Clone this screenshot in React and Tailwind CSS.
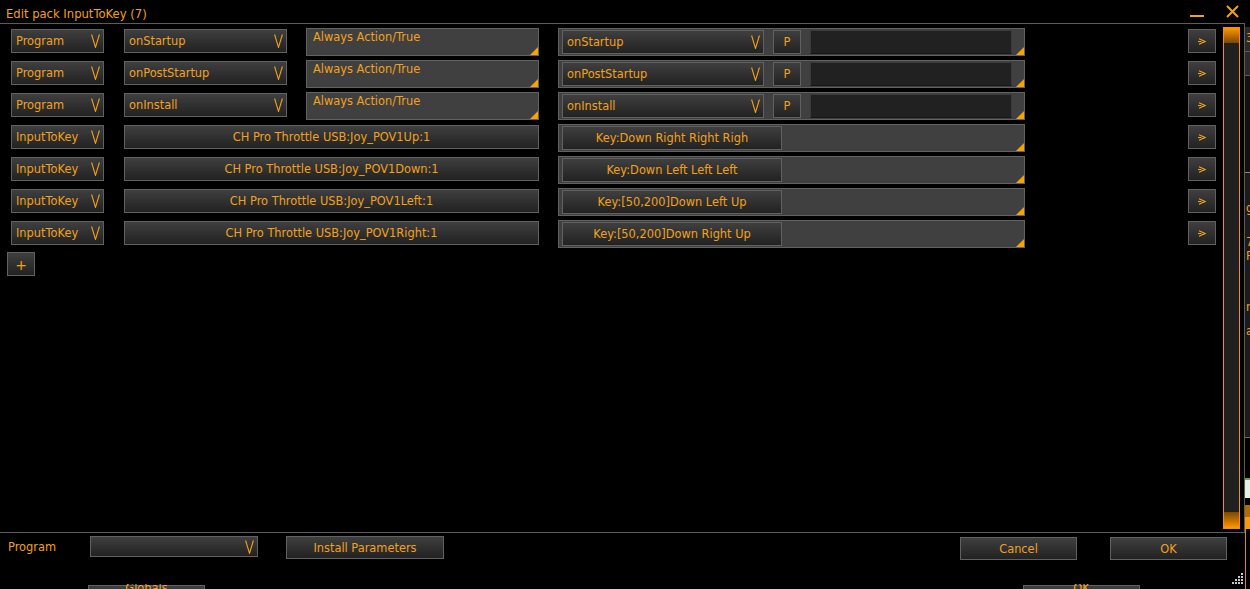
import React from 'react';

const PROGRAM_ROWS = ['onStartup', 'onPostStartup', 'onInstall'];

const INPUT_ROWS = [
  { input: 'CH Pro Throttle USB:Joy_POV1Up:1', key: 'Key:Down Right Right Righ' },
  { input: 'CH Pro Throttle USB:Joy_POV1Down:1', key: 'Key:Down Left Left Left' },
  { input: 'CH Pro Throttle USB:Joy_POV1Left:1', key: 'Key:[50,200]Down Left Up' },
  { input: 'CH Pro Throttle USB:Joy_POV1Right:1', key: 'Key:[50,200]Down Right Up' },
];

const BTN = 'border border-[#616161] bg-linear-to-b from-[#3f3f3f] to-[#222222]';

function Chevron() {
  return (
    <svg width="9" height="14" viewBox="0 0 9 14" className="shrink-0">
      <path d="M0.6 0.5 L4.5 13.3 L8.4 0.5" fill="none" stroke="#f2a11b" strokeWidth="1.1" />
    </svg>
  );
}

function Select({ label, className = '' }) {
  return (
    <div className={`flex items-center justify-between pl-[4px] pr-[3px] ${BTN} ${className}`}>
      <span className="whitespace-nowrap pt-[2px]">{label}</span>
      <Chevron />
    </div>
  );
}

function Btn({ children, className = '' }) {
  return <div className={`flex items-center justify-center whitespace-nowrap pt-[2px] ${BTN} ${className}`}>{children}</div>;
}

function Corner() {
  return <div className="absolute right-0 bottom-0 w-[8px] h-[8px] bg-[#f7a300] [clip-path:polygon(100%_0,100%_100%,0_100%)]" />;
}

function NextBtn() {
  return (
    <Btn className="ml-[163px] mt-[1px] w-[28px] h-[24px]">
      <svg width="8" height="7" viewBox="0 0 8 7" className="-mt-[2px]">
        <path d="M1 0.8 L7 3.5 L1 6.2 M0 3.5 H3.5" fill="none" stroke="#f2a11b" strokeWidth="1.2" />
      </svg>
    </Btn>
  );
}

function ProgramRow({ event }) {
  return (
    <div className="flex items-start h-[32px]">
      <Select label="Program" className="ml-[11px] mt-[1px] w-[93px] h-[24px]" />
      <Select label={event} className="ml-[20px] mt-[1px] w-[163px] h-[24px]" />
      <div className="relative ml-[19px] w-[233px] h-[28px] border border-[#616161] bg-[#404040] pl-[6px] pt-[1px] leading-[14px]">
        Always Action/True
        <Corner />
      </div>
      <div className="relative ml-[19px] w-[467px] h-[28px] border border-[#616161] bg-[#404040] pl-[3px] pt-[1px] flex items-start">
        <Select label={event} className="w-[202px] h-[24px]" />
        <Btn className="ml-[9px] w-[28px] h-[24px]">P</Btn>
        <div className="ml-[9px] w-[202px] h-[24px] border border-[#3a3a3a] border-b-[#151515] bg-[#212121]" />
        <Corner />
      </div>
      <NextBtn />
    </div>
  );
}

function InputRow({ input, keyText }) {
  return (
    <div className="flex items-start h-[32px]">
      <Select label="InputToKey" className="ml-[11px] mt-[1px] w-[93px] h-[24px]" />
      <Btn className="ml-[20px] mt-[1px] w-[415px] h-[24px]">{input}</Btn>
      <div className="relative ml-[19px] w-[467px] h-[28px] border border-[#616161] bg-[#404040] pl-[3px] pt-[1px] flex items-start">
        <Btn className="w-[220px] h-[24px]">{keyText}</Btn>
        <Corner />
      </div>
      <NextBtn />
    </div>
  );
}

function ResizeGrip() {
  return (
    <svg width="12" height="12" viewBox="0 0 12 12" className="ml-[5px] mt-[36px]">
      {[[9, 1], [6, 4], [9, 4], [3, 7], [6, 7], [9, 7], [0, 10], [3, 10], [6, 10], [9, 10]].map(([x, y], i) => (
        <rect key={i} x={x} y={y} width="2" height="2" fill="#c8c8c8" />
      ))}
    </svg>
  );
}

export default function App() {
  return (
    <div className="w-[1250px] h-[589px] bg-black overflow-hidden flex text-[#f2a11b] text-[11.4px] font-['DejaVu_Sans',Verdana,sans-serif]">
      <div className="w-[1245px] flex flex-col">
        <div className="h-[24px] border-b border-[#5c5c5c] flex items-start">
          <span className="ml-[6px] mt-[7px] text-[11.6px] leading-[15px]">Edit pack InputToKey (7)</span>
          <div className="ml-auto mt-[15px] w-[14px] h-[2px] bg-[#f2a11b]" />
          <svg width="13" height="13" viewBox="0 0 13 13" className="ml-[22px] mt-[5px] mr-[6px]">
            <path d="M1 1 L12 12 M12 1 L1 12" stroke="#f2a11b" strokeWidth="2" />
          </svg>
        </div>

        <div className="h-[509px] border-r border-b border-[#5c5c5c] flex">
          <div className="w-[1216px] pt-[4px] flex flex-col">
            {PROGRAM_ROWS.map(ev => <ProgramRow key={ev} event={ev} />)}
            {INPUT_ROWS.map(r => <InputRow key={r.input} input={r.input} keyText={r.key} />)}
            <Btn className="ml-[7px] w-[28px] h-[24px] text-[14px]">+</Btn>
          </div>
          <div className="ml-[7px] mt-[3px] w-[17px] h-[502px] border border-[#f39200] bg-[#202020] flex flex-col justify-between">
            <div className="h-[15px] bg-linear-to-b from-[#ff9800] to-[#7e4700]" />
            <div className="h-[16px] bg-linear-to-b from-[#7e4700] to-[#ff9800]" />
          </div>
        </div>

        <div className="h-[51px] flex items-start pt-[3px]">
          <div className="ml-[8px] w-[82px] h-[21px] pt-[2px] flex items-center">Program</div>
          <Select label="" className="w-[168px] h-[21px]" />
          <Btn className="ml-[28px] w-[158px] h-[23px]">Install Parameters</Btn>
          <Btn className="ml-[516px] mt-[1px] w-[117px] h-[23px]">Cancel</Btn>
          <Btn className="ml-[33px] mt-[1px] w-[117px] h-[23px]">OK</Btn>
          <ResizeGrip />
        </div>

        <div className="h-[5px] flex items-start overflow-hidden">
          <div className={`ml-[88px] mt-[1px] w-[117px] h-[20px] flex justify-center ${BTN}`}>
            <span className="-mt-[5px] leading-[14px]">Globals</span>
          </div>
          <div className={`ml-[818px] mt-[1px] w-[117px] h-[20px] flex justify-center ${BTN}`}>
            <span className="-mt-[5px] leading-[14px]">OK</span>
          </div>
        </div>
      </div>

      <div className="w-[5px] h-[589px] flex flex-col overflow-hidden leading-[14px]">
        <div className="h-[27px]" />
        <div className="h-[24px] bg-[#2a2a2a] pl-[1px] pt-[4px]">3</div>
        <div className="h-[1px] bg-[#5a5a5a]" />
        <div className="h-[23px] bg-[#2a2a2a]" />
        <div className="h-[1px] bg-[#5a5a5a]" />
        <div className="h-[96px] bg-[#111111]" />
        <div className="h-[1px] bg-[#8a8a8a]" />
        <div className="h-[264px] bg-[#1b1b1b] pl-[1px] flex flex-col">
          <span className="mt-[28px]">g</span>
          <span className="mt-[20px]">7</span>
          <span>P</span>
          <span className="mt-[37px]">r</span>
          <span className="mt-[10px]">a</span>
        </div>
        <div className="h-[1px] bg-[#6a6a6a]" />
        <div className="h-[40px]" />
        <div className="h-[20px] bg-[#e8f0e0] border-t-2 border-[#6aa050]" />
        <div className="h-[7px]" />
        <div className="h-[12px] bg-[#b06d00]" />
        <div className="h-[12px] bg-[#ff9900]" />
        <div className="flex-1 border-l border-[#e08a00]" />
      </div>
    </div>
  );
}
